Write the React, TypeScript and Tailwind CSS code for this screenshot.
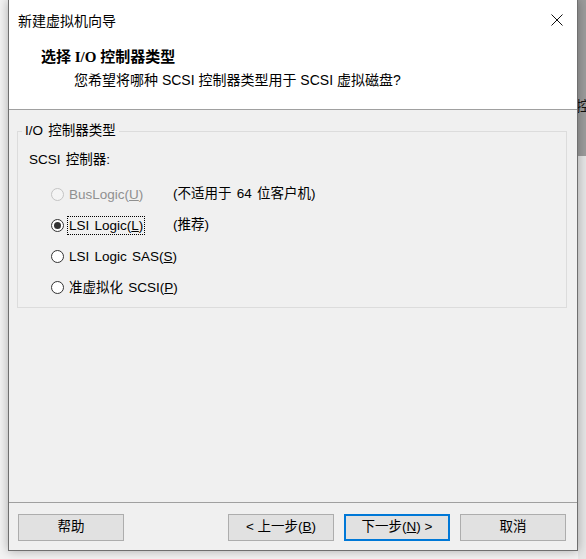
import React from "react";

const font = { fontFamily: '"Liberation Sans", "Noto Sans CJK SC", sans-serif' };

function Radio({ checked, disabled }: { checked?: boolean; disabled?: boolean }) {
  return (
    <span
      className={`flex h-[13px] w-[13px] shrink-0 items-center justify-center rounded-full border ${
        disabled ? "border-[#c4c4c4] bg-[#f4f4f4]" : "border-[#333333] bg-white"
      }`}
    >
      {checked && <span className="h-[7px] w-[7px] rounded-full bg-[#333333]" />}
    </span>
  );
}

function Option({
  label,
  mnemonic,
  note,
  checked,
  disabled,
  focused,
}: {
  label: string;
  mnemonic: string;
  note?: string;
  checked?: boolean;
  disabled?: boolean;
  focused?: boolean;
}) {
  return (
    <div className="flex h-[31px] items-center whitespace-nowrap">
      <Radio checked={checked} disabled={disabled} />
      <span className={`ml-[5px] min-w-[104px] leading-[20px] ${disabled ? "text-[#8f8f8f]" : "text-black"}`}>
        <span
          className={
            focused ? "-ml-[2px] border border-dotted border-black px-[1px] py-[1px]" : ""
          }
        >
          {label}(<u>{mnemonic}</u>)
        </span>
      </span>
      {note && <span className="text-black">{note}</span>}
    </div>
  );
}

function Button({ children, primary }: { children: React.ReactNode; primary?: boolean }) {
  return (
    <button
      className={`flex h-[27px] w-[106px] items-center justify-center bg-[#e1e1e1] text-[13.5px] text-black ${
        primary ? "border-2 border-[#0078d7]" : "border border-[#adadad]"
      }`}
    >
      {children}
    </button>
  );
}

export default function App() {
  return (
    <div className="flex h-[559px] w-[586px] overflow-hidden bg-[#f3f3f3] text-[13.5px]" style={font}>
      <div className="w-[8px] shrink-0" />
      <div className="relative z-10 flex h-[551px] w-[570px] shrink-0 flex-col border-x border-b border-[#6f6f6f] bg-[#f0f0f0] shadow-[0_0_10px_rgba(0,0,0,0.3)]">
        <div className="flex h-[110px] flex-col border-b border-[#a0a0a0] bg-white">
          <div className="flex h-[40px] items-center justify-between pl-[9px] pr-[13px]">
            <span className="text-[14px] text-black" style={{ fontFamily: '"Noto Sans CJK SC", sans-serif' }}>
              新建虚拟机向导
            </span>
            <svg width="12" height="12" viewBox="0 0 12 12" className="mr-[1px]">
              <path d="M0.5 0.5 L11.5 11.5 M11.5 0.5 L0.5 11.5" stroke="#111" strokeWidth="1" />
            </svg>
          </div>
          <div
            className="ml-[32px] mt-[7px] text-[15px] font-bold leading-[20px] text-black"
            style={{ fontFamily: '"Liberation Serif", "Noto Sans CJK SC", serif' }}
          >
            选择 I/O 控制器类型
          </div>
          <div className="ml-[65px] mt-[3px] text-[14px] leading-[20px] text-black">
            您希望将哪种 SCSI 控制器类型用于 SCSI 虚拟磁盘?
          </div>
        </div>

        <div className="flex flex-1 flex-col">
          <fieldset className="ml-[8px] mt-[12px] w-[550px] border border-[#dcdcdc] px-[11px] pb-[4px] pt-0 [word-spacing:1.5px]">
            <legend className="-ml-[7px] px-[3px] leading-[18px] text-black">I/O 控制器类型</legend>
            <div className="mt-[10px] leading-[20px] text-black">SCSI 控制器:</div>
            <div className="ml-[22px] mt-[9px] flex flex-col">
              <Option label="BusLogic" mnemonic="U" note="(不适用于 64 位客户机)" disabled />
              <Option label="LSI Logic" mnemonic="L" note="(推荐)" checked focused />
              <Option label="LSI Logic SAS" mnemonic="S" />
              <Option label="准虚拟化 SCSI" mnemonic="P" />
            </div>
          </fieldset>

          <div className="mt-auto flex h-[48px] flex-col border-t border-[#a0a0a0]">
            <div className="mt-[11px] flex items-center pl-[9px] [word-spacing:2px]">
              <Button>帮助</Button>
              <div className="ml-[104px] flex gap-[10px]">
                <Button>
                  &lt; 上一步(<u>B</u>)
                </Button>
                <Button primary>
                  下一步(<u>N</u>) &gt;
                </Button>
                <Button>取消</Button>
              </div>
            </div>
          </div>
        </div>
      </div>
      <div className="flex w-[8px] shrink-0 flex-col">
        <div className="h-[156px] overflow-hidden bg-[#9c9c9c] pt-[96px]">
          <span className="-ml-[2px] block text-[14px] leading-[20px] text-[#111]">控</span>
        </div>
        <div className="flex-1 bg-[#e6e6e6]" />
      </div>
    </div>
  );
}
